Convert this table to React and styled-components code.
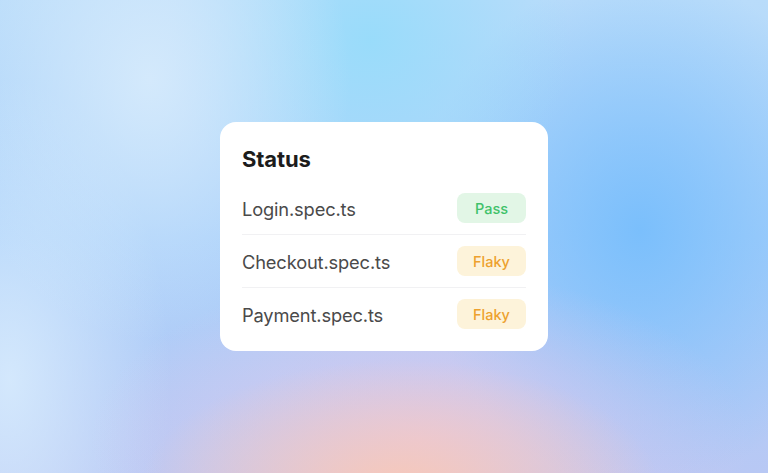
import React from "react";
import styled, { createGlobalStyle } from "styled-components";

const GlobalStyle = createGlobalStyle`
  html, body {
    margin: 0;
    padding: 0;
  }
  body {
    font-family: Inter, "Noto Sans", sans-serif;
  }
`;

const tests = [
  { id: 1, name: "Login.spec.ts", status: "pass" },
  { id: 2, name: "Checkout.spec.ts", status: "flaky" },
  { id: 3, name: "Payment.spec.ts", status: "flaky" },
];

const labels = { pass: "Pass", flaky: "Flaky" };

export default function App() {
  return (
    <>
      <GlobalStyle />
      <Backdrop>
        <Card>
          <Title>Status</Title>
          <List>
            {tests.map((t) => (
              <Row key={t.id}>
                <FileName>{t.name}</FileName>
                <Badge $kind={t.status}>{labels[t.status]}</Badge>
              </Row>
            ))}
          </List>
        </Card>
      </Backdrop>
    </>
  );
}

const Backdrop = styled.div`
  width: 768px;
  height: 473px;
  display: flex;
  justify-content: center;
  align-items: center;
  overflow: hidden;
  background:
    radial-gradient(ellipse 260px 130px at 400px 490px, rgba(250, 200, 180, 0.95), rgba(250, 200, 180, 0) 100%),
    radial-gradient(ellipse 330px 170px at 420px 440px, rgba(225, 200, 235, 0.9), rgba(225, 200, 235, 0) 100%),
    radial-gradient(ellipse 200px 260px at 150px 80px, rgba(215, 235, 252, 0.9), rgba(215, 235, 252, 0) 100%),
    radial-gradient(ellipse 160px 300px at 10px 380px, rgba(215, 235, 253, 0.9), rgba(215, 235, 253, 0) 100%),
    radial-gradient(ellipse 200px 200px at 370px 40px, rgba(150, 220, 250, 0.9), rgba(150, 220, 250, 0) 100%),
    radial-gradient(ellipse 220px 260px at 640px 230px, rgba(120, 190, 252, 0.95), rgba(120, 190, 252, 0) 100%),
    linear-gradient(180deg, #b9dcfa 0%, #a9d0fa 50%, #b8c8f4 100%);
`;

const Card = styled.div`
  width: 328px;
  height: 229px;
  box-sizing: border-box;
  background: #ffffff;
  border-radius: 16px;
  padding: 24px 22px 13px 22px;
  display: flex;
  flex-direction: column;
`;

const Title = styled.h2`
  margin: 0;
  font-size: 22px;
  line-height: 26px;
  font-weight: 650;
  color: #1c1c1c;
  letter-spacing: -0.1px;
`;

const List = styled.div`
  margin-top: 10px;
  display: flex;
  flex-direction: column;
`;

const Row = styled.div`
  height: 52px;
  display: flex;
  align-items: center;
  justify-content: space-between;
  border-bottom: 1px solid #f1f1f3;

  &:last-child {
    border-bottom: none;
  }
`;

const FileName = styled.span`
  font-size: 18.3px;
  color: #4a4a4a;
  font-weight: 400;
  letter-spacing: -0.15px;
  padding-top: 2px;
`;

const Badge = styled.span`
  width: 69px;
  height: 30px;
  border-radius: 8px;
  display: flex;
  align-items: center;
  justify-content: center;
  font-size: 14.5px;
  font-weight: 450;
  background: ${(p) => (p.$kind === "pass" ? "#e2f6e6" : "#fdf3da")};
  color: ${(p) => (p.$kind === "pass" ? "#3fc26a" : "#eda12e")};
`;
